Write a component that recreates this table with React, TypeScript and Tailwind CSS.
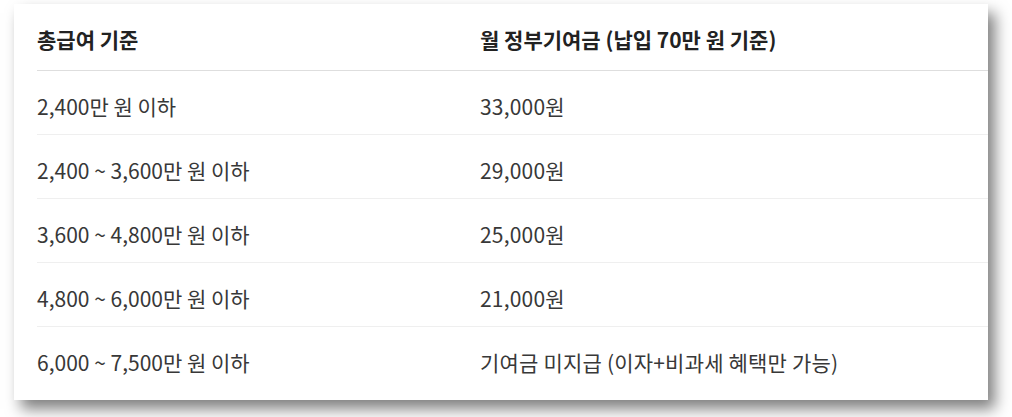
const rows = [
  ['2,400만 원 이하', '33,000원'],
  ['2,400 ~ 3,600만 원 이하', '29,000원'],
  ['3,600 ~ 4,800만 원 이하', '25,000원'],
  ['4,800 ~ 6,000만 원 이하', '21,000원'],
  ['6,000 ~ 7,500만 원 이하', '기여금 미지급 (이자+비과세 혜택만 가능)'],
]

export default function App() {
  return (
    <div
      className="w-[1012px] h-[417px] bg-white pl-[14px] pt-[4px] overflow-hidden"
      style={{ fontFamily: '"Malgun Gothic", "Noto Sans CJK KR", "Noto Sans", sans-serif' }}
    >
      <div className="w-[974px] h-[396px] bg-white pl-[23px] shadow-[7px_9px_14px_rgba(0,0,0,0.5)]">
        <table className="w-full border-collapse text-[21px] text-[#383838]">
          <thead>
            <tr className="h-[66px] border-b border-[#dedede]">
              <th className="w-[443px] pt-[6px] text-left font-bold text-[#222]">총급여 기준</th>
              <th className="pt-[6px] text-left font-bold text-[#222]">월 정부기여금 (납입 70만 원 기준)</th>
            </tr>
          </thead>
          <tbody>
            {rows.map((r, i) => (
              <tr
                key={i}
                className={i < rows.length - 1 ? 'h-[64px] border-b border-[#efefef]' : 'h-[64px]'}
              >
                <td className="pt-[9px]">{r[0]}</td>
                <td className="pt-[9px] tracking-[0.2px]">{r[1]}</td>
              </tr>
            ))}
          </tbody>
        </table>
      </div>
    </div>
  )
}
